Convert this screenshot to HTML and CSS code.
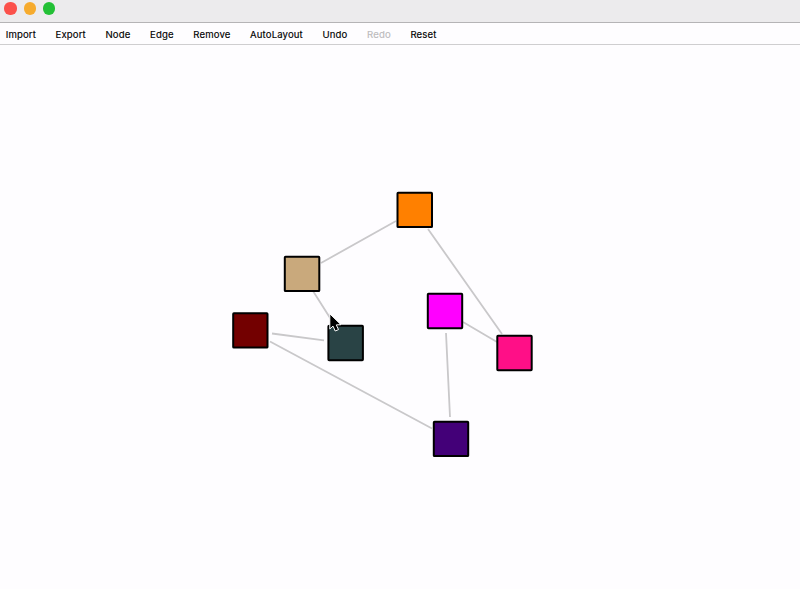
FILE: index.html
```html
<!DOCTYPE html>
<html lang="en">
<head>
<meta charset="utf-8">
<title>Graph Editor</title>
<link rel="stylesheet" href="styles.css">
</head>
<body>
<div class="window">
  <header class="titlebar">
    <span class="light close"></span>
    <span class="light minimize"></span>
    <span class="light zoom"></span>
  </header>
  <nav class="menubar">
    <span>Import</span>
    <span>Export</span>
    <span>Node</span>
    <span>Edge</span>
    <span>Remove</span>
    <span>AutoLayout</span>
    <span>Undo</span>
    <span class="disabled">Redo</span>
    <span>Reset</span>
  </nav>
  <main class="canvas">
    <svg width="800" height="544" viewBox="0 45 800 544">
      <g class="edges">
        <path d="M396 221 321 263M428 229 502 334M313 291 332 321M272 333.5 324 340.3M270 341.5 432 428.5M463 322 497 342M446 333 450 417"/>
      </g>
      <g class="nodes">
        <rect x="397.5" y="192.8" width="34.5" height="34.3" rx=".7" fill="#ff8000"/>
        <rect x="284.8" y="256.8" width="34.5" height="34.3" rx=".7" fill="#c9a97c"/>
        <rect x="233.2" y="313.3" width="34.3" height="34.3" rx=".7" fill="#730000"/>
        <rect x="328.4" y="325.8" width="34.5" height="34.4" rx=".7" fill="#294345"/>
        <rect x="427.8" y="293.8" width="34.4" height="34.4" rx=".7" fill="#ff00ff"/>
        <rect x="497.3" y="335.8" width="34.4" height="34.4" rx=".7" fill="#ff0f87"/>
        <rect x="433.8" y="421.7" width="34.4" height="34.4" rx=".7" fill="#430078"/>
      </g>
      <path class="cursor" d="M329.8 313.8V329L333 326.1 335.2 331 338.5 329.6 336.3 324.9 341 324.7Z"/>
    </svg>
  </main>
</div>
</body>
</html>
```

FILE: styles.css
```css
body {
  margin: 0;
  font-family: Inter, "Liberation Sans", sans-serif;
}

.window {
  display: flex;
  flex-direction: column;
  height: 589px;
  overflow: hidden;
  background: #fefdff;
}

.titlebar {
  display: flex;
  gap: 7px;
  box-sizing: border-box;
  height: 23px;
  padding: 2.4px 4.4px;
  background: #ecebed;
  border-bottom: 1px solid #b5b4b6;
}

.light {
  width: 12.2px;
  height: 12.2px;
  border-radius: 50%;
}

.close { background: #fb514b; }
.minimize { background: #f6ab2e; }
.zoom { background: #23c036; }

.menubar {
  display: flex;
  align-items: center;
  gap: 19.6px;
  box-sizing: border-box;
  height: 22px;
  padding: 2px 0 0 5.7px;
  border-bottom: 1px solid #cfced0;
  color: #000;
  font-size: 9.6px;
  font-weight: 400;
  letter-spacing: 0.13px;
  -webkit-text-stroke: 0.15px currentColor;
}

.disabled { color: #bcbbbd; }

.canvas { flex: 1; }

.canvas svg { display: block; }

.edges {
  fill: none;
  stroke: #c9c8ca;
  stroke-width: 1.8;
}

.nodes {
  stroke: #000;
  stroke-width: 2;
}

.cursor {
  fill: #000;
  stroke: #fff;
  stroke-width: 1;
  stroke-linejoin: round;
}
```
